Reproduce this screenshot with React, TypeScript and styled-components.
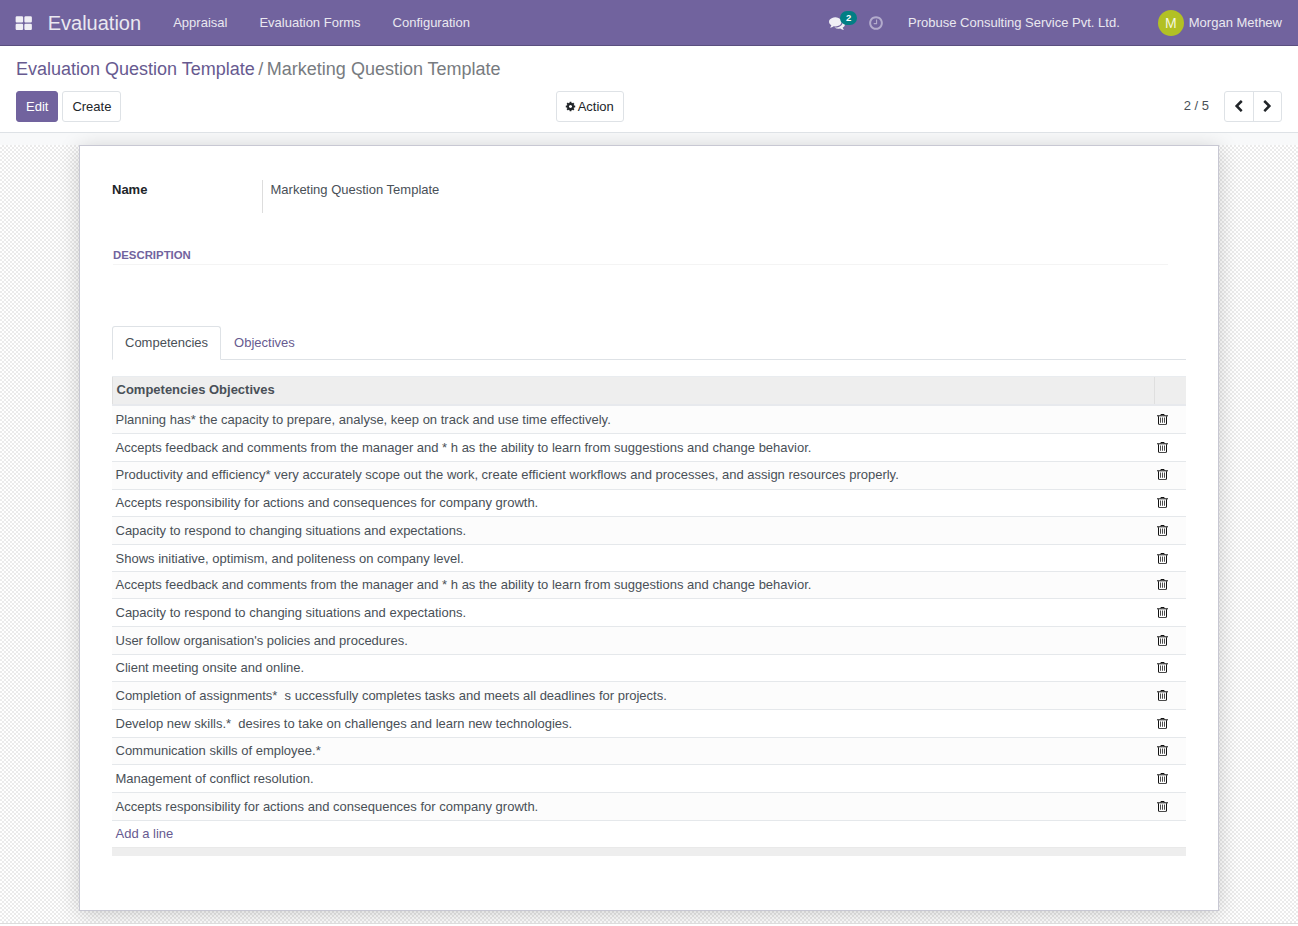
import React from 'react';
import styled, { createGlobalStyle } from 'styled-components';

const GlobalStyle = createGlobalStyle`
  *, *::before, *::after { box-sizing: border-box; }
  html, body { margin: 0; padding: 0; background: #fff; }
  body {
    font-family: "Liberation Sans", Arial, sans-serif;
    font-size: 13px;
    line-height: 20px;
    color: #495057;
    overflow: hidden;
  }
  button { font: inherit; margin: 0; cursor: pointer; }
  a { text-decoration: none; color: inherit; }
`;

const paths = {
  grid: 'M832 1024v384q0 52-38 90t-90 38h-512q-52 0-90-38t-38-90v-384q0-52 38-90t90-38h512q52 0 90 38t38 90zm0-768v384q0 52-38 90t-90 38h-512q-52 0-90-38t-38-90v-384q0-52 38-90t90-38h512q52 0 90 38t38 90zm896 768v384q0 52-38 90t-90 38h-512q-52 0-90-38t-38-90v-384q0-52 38-90t90-38h512q52 0 90 38t38 90zm0-768v384q0 52-38 90t-90 38h-512q-52 0-90-38t-38-90v-384q0-52 38-90t90-38h512q52 0 90 38t38 90z',
  cog: 'M1152 896q0-106-75-181t-181-75-181 75-75 181 75 181 181 75 181-75 75-181zm512-109v222q0 12-8 23t-20 13l-185 28q-19 54-39 91 35 50 107 138 10 12 10 25t-9 23q-27 37-99 108t-94 71q-12 0-26-9l-138-108q-44 23-91 38-16 136-29 186-7 28-36 28h-222q-14 0-24.5-8.5t-11.5-21.5l-28-184q-49-16-90-37l-141 107q-10 9-25 9-14 0-25-11-126-114-165-168-7-10-7-23 0-12 8-23 15-21 51-66.5t54-70.5q-27-50-41-99l-183-27q-13-2-21-12.5t-8-23.5v-222q0-12 8-23t19-13l186-28q14-46 39-92-40-57-107-138-10-12-10-24 0-10 9-23 26-36 98.5-107.5t94.5-71.5q13 0 26 10l138 107q44-23 91-38 16-136 29-186 7-28 36-28h222q14 0 24.5 8.5t11.5 21.5l28 184q49 16 90 37l142-107q9-9 24-9 13 0 25 10 129 119 165 170 7 8 7 22 0 12-8 23-15 21-51 66.5t-54 70.5q26 50 41 98l183 28q13 2 21 12.5t8 23.5z',
  clock: 'M1024 544v448q0 14-9 23t-23 9h-320q-14 0-23-9t-9-23v-64q0-14 9-23t23-9h224v-352q0-14 9-23t23-9h64q14 0 23 9t9 23zm416 352q0-148-73-273t-198-198-273-73-273 73-198 198-73 273 73 273 198 198 273 73 273-73 198-198 73-273zm224 0q0 209-103 385.5t-279.5 279.5-385.5 103-385.5-103-279.5-279.5-103-385.5 103-385.5 279.5-279.5 385.5-103 385.5 103 279.5 279.5 103 385.5z',
  comments: 'M1408 768q0 139-94 257t-256.5 186.5-353.5 68.5q-86 0-176-16-124 88-278 128-36 9-86 16h-3q-11 0-20.5-8t-11.5-21q-1-3-1-6.5t.5-6.5 2-6l2.500-5 3.500-5.500 4-5 4.500-5 4-4.500q5-6 23-25t26-29.500 22.500-29 25-38.500 20.500-44q-124-72-195-177t-71-224q0-139 94-257t256.500-186.500 353.500-68.500 353.500 68.500 256.500 186.500 94 257zm384 256q0 120-71 224.500t-195 176.500q10 24 20.500 44t25 38.500 22.500 29 26 29.500 23 25q1 1 4 4.500t4.500 5 4 5 3.500 5.500l2.500 5 2 6 .5 6.500-1 6.500q-3 14-13 22t-22 7q-50-7-86-16-154-40-278-128-90 16-176 16-271 0-472-132 58 4 88 4 161 0 309-45t264-129q125-92 192-212t67-254q0-77-23-152 129 71 204 178t75 230z',
  left: 'M1427 301l-531 531 531 531q19 19 19 45t-19 45l-166 166q-19 19-45 19t-45-19l-742-742q-19-19-19-45t19-45l742-742q19-19 45-19t45 19l166 166q19 19 19 45t-19 45z',
  right: 'M1363 877l-742 742q-19 19-45 19t-45-19l-166-166q-19-19-19-45t19-45l531-531-531-531q-19-19-19-45t19-45l166-166q19-19 45-19t45 19l742 742q19 19 19 45t-19 45z',
};

const Svg = styled.svg`
  display: block;
  flex: none;
  fill: currentColor;
`;

const Icon = ({ name, size }: { name: keyof typeof paths; size: number }) => (
  <Svg width={size} height={size} viewBox="0 0 1792 1792">
    <path d={paths[name]} />
  </Svg>
);

const TrashIcon = () => (
  <Svg width={13} height={13} viewBox="0 0 13 13">
    <path d="M1 2.300h11v1H1z" />
    <path d="M4.200 2.600 4.700 1.300Q4.800 1 5.200 1h2.600q.4 0 .5.3l.5 1.300H7.900l-.3-.7H5.400l-.3.7z" />
    <path d="M2 3.300h1v7.200q0 .4.4.4h6.200q.4 0 .4-.4V3.300h1v7.300q0 1.200-1.100 1.200H3.100Q2 11.800 2 10.600z" />
    <path d="M4 4.500h1v5.200H4zM6 4.500h1v5.200H6zM8 4.500h1v5.200H8z" opacity="0.75" />
  </Svg>
);

const Page = styled.div`
  width: 1298px;
  height: 926px;
  display: flex;
  flex-direction: column;
  background: #fff;
`;

const Navbar = styled.nav`
  height: 46px;
  flex: none;
  display: flex;
  align-items: center;
  padding: 0 16px 0 15px;
  background: #71639e;
  border-bottom: 1px solid #5a4f7f;
  color: #eae8f0;
`;

const AppsToggle = styled.a`
  width: 18px;
  padding-top: 2px;
  color: #f0eff5;
`;

const Brand = styled.a`
  width: 110px;
  margin-left: 14.7px;
  font-size: 20px;
  line-height: 44px;
  white-space: nowrap;
`;

const Menu = styled.div`
  display: flex;
  gap: 32px;
  margin-left: 15.5px;
  line-height: 44px;
`;

const Systray = styled.div`
  display: flex;
  align-items: center;
  margin-left: auto;
`;

const Messages = styled.div`
  position: relative;
  color: #f0eff5;
`;

const Badge = styled.span`
  position: absolute;
  left: 11px;
  top: -4px;
  width: 17px;
  height: 14px;
  border-radius: 7px;
  background: #017e84;
  color: #fff;
  font-size: 9.5px;
  font-weight: 700;
  line-height: 14px;
  text-align: center;
`;

const Activities = styled.div`
  margin-left: 23px;
  color: #b3abcc;
`;

const Company = styled.span`
  margin-left: 24px;
  line-height: 44px;
`;

const Avatar = styled.span`
  width: 26px;
  height: 26px;
  margin: 0 5px 0 38px;
  border-radius: 50%;
  background: #b2c024;
  color: #f4f6de;
  font-size: 14px;
  line-height: 27px;
  text-align: center;
`;

const ControlPanel = styled.header`
  height: 87px;
  flex: none;
  padding: 10px 16px 0;
  border-bottom: 1px solid #dee2e6;
`;

const Breadcrumb = styled.div`
  display: flex;
  gap: 3.5px;
  height: 27px;
  font-size: 18px;
  line-height: 27px;
  color: #777b80;
`;

const Crumb = styled.a`
  color: #675a90;
`;

const Controls = styled.div`
  display: grid;
  grid-template-columns: 540px 1fr auto;
  margin-top: 8px;
`;

const ButtonGroup = styled.div`
  display: flex;
  gap: 4px;
`;

const Button = styled.button<{ $primary?: boolean; $withIcon?: boolean }>`
  height: 31px;
  padding: 0 9px 0 ${(p) => (p.$withIcon ? 8.2 : 9)}px;
  display: flex;
  align-items: center;
  gap: 1.5px;
  border: 1px solid ${(p) => (p.$primary ? '#71639e' : '#dee2e6')};
  border-radius: 3px;
  background: ${(p) => (p.$primary ? '#71639e' : '#fff')};
  color: ${(p) => (p.$primary ? '#fff' : '#212529')};
`;

const Pager = styled.div`
  display: flex;
  line-height: 29px;
`;

const PagerButtons = styled.div`
  display: flex;
  margin-left: 15px;
  width: 58px;
  height: 31px;
  border: 1px solid #dee2e6;
  border-radius: 3px;
`;

const PagerButton = styled.button`
  flex: 1;
  display: flex;
  align-items: center;
  justify-content: center;
  padding: 0;
  border: 0;
  background: transparent;
  color: #212529;
  & + & { border-left: 1px solid #dee2e6; }
`;

const Content = styled.main`
  height: 791px;
  flex: none;
  padding-top: 12px;
  background: #f8f9fa;
  border-bottom: 1px solid #dcdcdc;
  overflow: hidden;
`;

const SheetBackdrop = styled.div`
  height: 778px;
  padding: 0 79px;
  background: repeating-conic-gradient(#ebebeb 0% 25%, #fff 0% 50%) 0 0 / 4px 4px;
`;

const Sheet = styled.section`
  height: 766px;
  padding: 34px 32px 0;
  background: #fff;
  border: 1px solid #c8c8d3;
  box-shadow: 0 3px 20px rgba(0, 0, 0, 0.18);
`;

const FieldRow = styled.div`
  display: flex;
  height: 33px;
`;

const FieldLabel = styled.label`
  width: 151px;
  border-right: 1px solid #ddd;
  font-weight: 700;
  color: #212529;
`;

const FieldValue = styled.span`
  padding-left: 7.5px;
`;

const SectionTitle = styled.h2`
  width: 1055px;
  height: 21px;
  margin: 31px 0 0 1px;
  padding-top: 1px;
  border-bottom: 1px solid #f4f4f4;
  font-size: 11.4px;
  font-weight: 700;
  line-height: 20px;
  color: #71639e;
`;

const Tabs = styled.div`
  display: flex;
  height: 34px;
  margin-top: 61px;
  border-bottom: 1px solid #dee2e6;
`;

const Tab = styled.a<{ $active?: boolean }>`
  height: 34px;
  padding: 0 12px;
  line-height: 32px;
  border: 1px solid ${(p) => (p.$active ? '#dee2e6' : 'transparent')};
  border-bottom-color: ${(p) => (p.$active ? '#fff' : 'transparent')};
  border-radius: 3px 3px 0 0;
  color: ${(p) => (p.$active ? '#495057' : '#675a90')};
`;

const List = styled.div`
  margin-top: 16px;
`;

const ListHeader = styled.div`
  display: flex;
  height: 30px;
  background: #eee;
  border-top: 1px solid #e9ecef;
  border-bottom: 2px solid #e7e9ed;
  font-weight: 700;
  line-height: 25px;
`;

const HeaderCell = styled.div<{ $width: number }>`
  width: ${(p) => p.$width}px;
  height: 27px;
  padding-left: 3.5px;
  border-left: 1px solid #dfdfdf;
`;

const ListRow = styled.div<{ $height: number; $pad: number; $odd: boolean }>`
  display: flex;
  justify-content: space-between;
  height: ${(p) => p.$height}px;
  padding: ${(p) => p.$pad}px 17px 0 3.5px;
  background: ${(p) => (p.$odd ? '#fcfcfc' : '#fff')};
  border-bottom: 1px solid #e5e8eb;
  white-space: pre;
`;

const DeleteButton = styled.span`
  padding-top: 3px;
  color: #111;
`;

const AddLine = styled.a`
  display: block;
  height: 26px;
  padding-left: 3.5px;
  line-height: 25px;
  color: #675a90;
`;

const ListFooter = styled.div`
  height: 9px;
  background: #eee;
  border-top: 1px solid #e9e9e9;
`;

const feedback =
  'Accepts feedback and comments from the manager and * h as the ability to learn from suggestions and change behavior.';
const responsibility = 'Accepts responsibility for actions and consequences for company growth.';
const capacity = 'Capacity to respond to changing situations and expectations.';

const rows: [string, number, number][] = [
  ['Planning has* the capacity to prepare, analyse, keep on track and use time effectively.', 28, 4],
  [feedback, 28, 4],
  ['Productivity and efficiency* very accurately scope out the work, create efficient workflows and processes, and assign resources properly.', 28, 3],
  [responsibility, 27, 3],
  [capacity, 28, 4],
  ['Shows initiative, optimism, and politeness on company level.', 27, 4],
  [feedback, 27, 3],
  [capacity, 28, 4],
  ["User follow organisation's policies and procedures.", 28, 4],
  ['Client meeting onsite and online.', 27, 3],
  ['Completion of assignments*\u00a0 s uccessfully completes tasks and meets all deadlines for projects.', 28, 4],
  ['Develop new skills.*\u00a0 desires to take on challenges and learn new technologies.', 28, 4],
  ['Communication skills of employee.*', 27, 3],
  ['Management of conflict resolution.', 28, 4],
  [responsibility, 28, 4],
];

export default function App() {
  return (
    <Page>
      <GlobalStyle />
      <Navbar>
        <AppsToggle><Icon name="grid" size={17.5} /></AppsToggle>
        <Brand>Evaluation</Brand>
        <Menu>
          <a>Appraisal</a>
          <a>Evaluation Forms</a>
          <a>Configuration</a>
        </Menu>
        <Systray>
          <Messages>
            <Icon name="comments" size={16} />
            <Badge>2</Badge>
          </Messages>
          <Activities>
            <Icon name="clock" size={16} />
          </Activities>
          <Company>Probuse Consulting Service Pvt. Ltd.</Company>
          <Avatar>M</Avatar>
          <span>Morgan Methew</span>
        </Systray>
      </Navbar>
      <ControlPanel>
        <Breadcrumb>
          <Crumb>Evaluation Question Template</Crumb>
          <span>/</span>
          <span>Marketing Question Template</span>
        </Breadcrumb>
        <Controls>
          <ButtonGroup>
            <Button $primary>Edit</Button>
            <Button>Create</Button>
          </ButtonGroup>
          <ButtonGroup>
            <Button $withIcon>
              <Icon name="cog" size={11} />
              Action
            </Button>
          </ButtonGroup>
          <Pager>
            <span>2 / 5</span>
            <PagerButtons>
              <PagerButton><Icon name="left" size={13} /></PagerButton>
              <PagerButton><Icon name="right" size={13} /></PagerButton>
            </PagerButtons>
          </Pager>
        </Controls>
      </ControlPanel>
      <Content>
        <SheetBackdrop>
          <Sheet>
            <FieldRow>
              <FieldLabel>Name</FieldLabel>
              <FieldValue>Marketing Question Template</FieldValue>
            </FieldRow>
            <SectionTitle>DESCRIPTION</SectionTitle>
            <Tabs>
              <Tab $active>Competencies</Tab>
              <Tab>Objectives</Tab>
            </Tabs>
            <List>
              <ListHeader>
                <HeaderCell $width={1042}>Competencies Objectives</HeaderCell>
                <HeaderCell $width={32} />
              </ListHeader>
              {rows.map(([text, height, pad], i) => (
                <ListRow key={i} $height={height} $pad={pad} $odd={i % 2 === 0}>
                  <span>{text}</span>
                  <DeleteButton><TrashIcon /></DeleteButton>
                </ListRow>
              ))}
              <AddLine>Add a line</AddLine>
              <ListFooter />
            </List>
          </Sheet>
        </SheetBackdrop>
      </Content>
    </Page>
  );
}
